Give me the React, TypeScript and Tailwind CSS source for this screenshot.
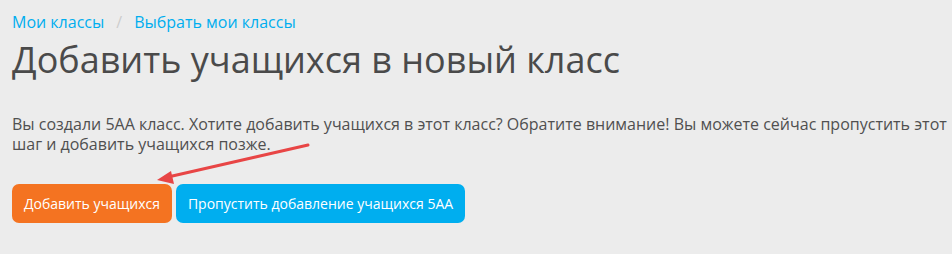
import React from "react";

export default function App() {
  return (
    <div className="relative w-[952px] h-[254px] bg-[#ececec] overflow-hidden" style={{ fontFamily: '"Open Sans", sans-serif' }}>
      <div className="pl-[12px] pt-[10px]">
        <nav className="flex items-center text-[16px] leading-[24px] text-[#00aeef]">
          <span>Мои классы</span>
          <span className="px-[12px] text-[#cccccc]">/</span>
          <span>Выбрать мои классы</span>
        </nav>
        <h1 className="mt-[4px] text-[36px] leading-[44px] text-[#4a4a4a]">Добавить учащихся в новый класс</h1>
        <p className="mt-[32px] w-[936px] text-[16px] leading-[20px] text-[#505050]">
          Вы создали 5АА класс. Хотите добавить учащихся в этот класс? Обратите внимание! Вы можете сейчас пропустить этот шаг и добавить учащихся позже.
        </p>
        <div className="mt-[30px] flex gap-[4px]">
          <button className="h-[39px] w-[160px] rounded-[7px] bg-[#f47321] text-[14px] text-white">Добавить учащихся</button>
          <button className="h-[39px] w-[289px] rounded-[7px] bg-[#00aeef] text-[14px] text-white">Пропустить добавление учащихся 5АА</button>
        </div>
      </div>
      <svg className="absolute left-0 top-0" width="952" height="254">
        <line x1="308" y1="145" x2="168" y2="177" stroke="#e84545" strokeWidth="3" strokeLinecap="round" />
        <polygon points="157,180 171,171 174,184" fill="#e84545" />
      </svg>
    </div>
  );
}
